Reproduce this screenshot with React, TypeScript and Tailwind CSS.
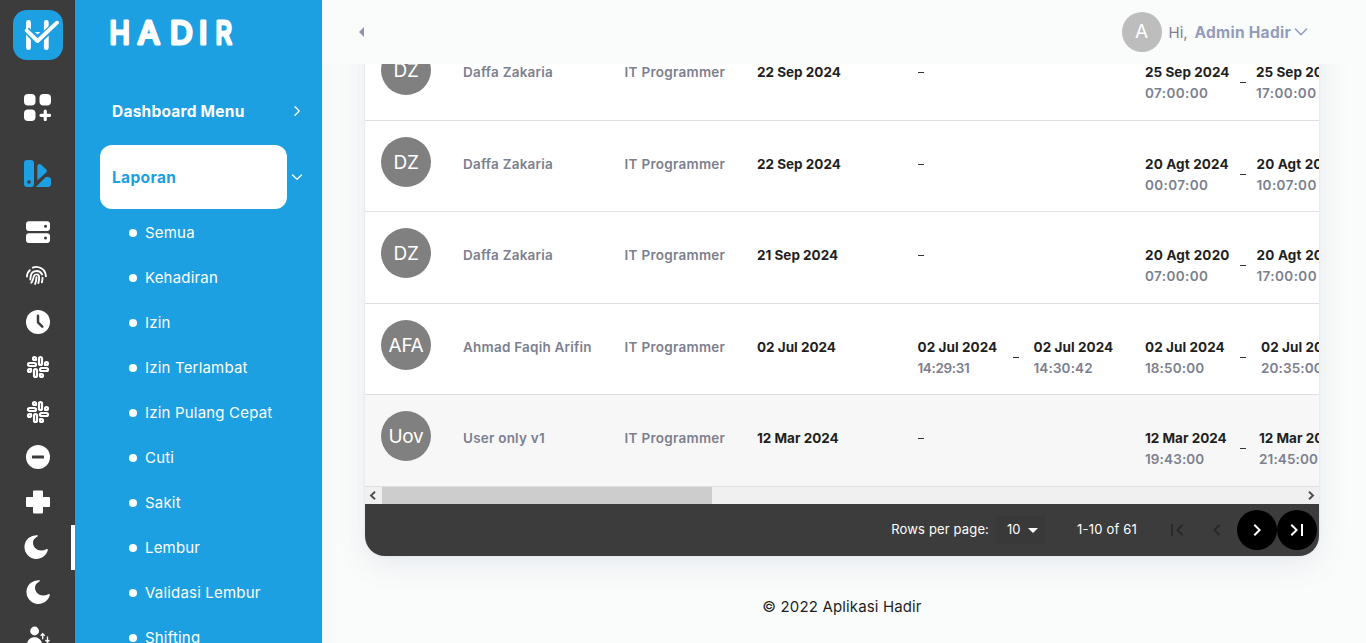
import type { ReactNode } from "react";
import { Slack } from "lucide-react";
import { MdArrowDropDown, MdChevronLeft, MdChevronRight, MdFirstPage, MdLastPage } from "react-icons/md";

type Stamp = { date: string; time: string; tracking?: string };
type Row = {
  initials: string;
  name: string;
  day: string;
  actual?: [Stamp, Stamp];
  plan: [Stamp, Stamp];
  planWidth: string;
  planGap: string;
  dateTracking?: string;
  height: string;
  bg: string;
};

const wide = "tracking-[0.4px]";
const tight = "tracking-[-0.35px]";
const mid = "tracking-[0.13px]";

const rows: Row[] = [
  {
    initials: "DZ", name: "Daffa Zakaria", day: "22 Sep 2024",
    plan: [{ date: "25 Sep 2024", time: "07:00:00", tracking: wide }, { date: "25 Sep 2024", time: "17:00:00", tracking: wide }],
    planWidth: "w-[111px]", planGap: "pr-[10px]", dateTracking: "tracking-[0.05px]", height: "h-[92px]", bg: "bg-white",
  },
  {
    initials: "DZ", name: "Daffa Zakaria", day: "22 Sep 2024",
    plan: [{ date: "20 Agt 2024", time: "00:07:00", tracking: wide }, { date: "20 Agt 2024", time: "10:07:00", tracking: wide }],
    planWidth: "w-[111.5px]", planGap: "pr-[11px]", dateTracking: "tracking-[0.13px]", height: "h-[91px]", bg: "bg-white",
  },
  {
    initials: "DZ", name: "Daffa Zakaria", day: "21 Sep 2024",
    plan: [{ date: "20 Agt 2020", time: "07:00:00", tracking: wide }, { date: "20 Agt 2020", time: "17:00:00", tracking: wide }],
    planWidth: "w-[111.5px]", planGap: "pr-[11px]", dateTracking: "tracking-[0.2px]", height: "h-[92px]", bg: "bg-white",
  },
  {
    initials: "AFA", name: "Ahmad Faqih Arifin", day: "02 Jul 2024",
    actual: [{ date: "02 Jul 2024", time: "14:29:31", tracking: tight }, { date: "02 Jul 2024", time: "14:30:42", tracking: mid }],
    plan: [{ date: "02 Jul 2024", time: "18:50:00", tracking: mid }, { date: "02 Jul 2024", time: "20:35:00", tracking: mid }],
    planWidth: "w-[116px]", planGap: "pr-[15px]", dateTracking: "tracking-[0.07px]", height: "h-[91px]", bg: "bg-white",
  },
  {
    initials: "Uov", name: "User only v1", day: "12 Mar 2024",
    plan: [{ date: "12 Mar 2024", time: "19:43:00", tracking: mid }, { date: "12 Mar 2024", time: "21:45:00", tracking: mid }],
    planWidth: "w-[114px]", planGap: "pr-[13px]", height: "h-[92px]", bg: "bg-[#f7f7f7]",
  },
];

function Dash() {
  return <span className="-ml-px h-px w-1.5 bg-[#333]" />;
}

function StampBlock({ stamp, dateTracking }: { stamp: Stamp; dateTracking?: string }) {
  return (
    <div className="whitespace-nowrap">
      <div className={`font-bold text-[#1f1f1f] ${dateTracking ?? ""}`}>{stamp.date}</div>
      <div className={`font-semibold text-[#7b808f] ${stamp.tracking ?? ""}`}>{stamp.time}</div>
    </div>
  );
}

function Range({ range, width, gap, dateTracking }: { range: [Stamp, Stamp]; width: string; gap: string; dateTracking?: string }) {
  return (
    <div className="flex">
      <div className={`flex shrink-0 justify-between ${width}`}>
        <StampBlock stamp={range[0]} dateTracking={dateTracking} />
        <span className={`flex items-center pb-px ${gap}`}>
          <Dash />
        </span>
      </div>
      <StampBlock stamp={range[1]} dateTracking={dateTracking} />
    </div>
  );
}

function TableRow({ row }: { row: Row }) {
  return (
    <div className={`flex shrink-0 items-start overflow-hidden border-b border-[#e0e0e0] text-[13.5px] leading-[21px] ${row.height} ${row.bg}`}>
      <div className="w-[98px] shrink-0 pt-4 pl-4">
        <div className="flex h-[50px] w-[50px] items-center justify-center rounded-full bg-[#808080] text-[19px] tracking-[-0.3px] text-white">
          {row.initials}
        </div>
      </div>
      <div className="w-[161.5px] shrink-0 pt-[33px] font-semibold tracking-[0.22px] text-[#7b808f]">{row.name}</div>
      <div className="w-[132.5px] shrink-0 pt-[33px] font-semibold tracking-[0.28px] text-[#7b808f]">IT Programmer</div>
      <div className="w-[160.5px] shrink-0 pt-[33px] font-bold text-[#1f1f1f]">{row.day}</div>
      <div className="w-[227.5px] shrink-0 pt-[33px]">
        {row.actual ? (
          <Range range={row.actual} width="w-[116px]" gap="pr-[15px]" dateTracking="tracking-[0.07px]" />
        ) : (
          <div className="flex h-[21px] items-center pl-[1.5px]">
            <Dash />
          </div>
        )}
      </div>
      <div className="shrink-0 pt-[33px]">
        <Range range={row.plan} width={row.planWidth} gap={row.planGap} dateTracking={row.dateTracking} />
      </div>
    </div>
  );
}

function BrandMark() {
  return (
    <svg className="h-[50px] w-[50px] shrink-0" viewBox="0 0 50 50" fill="none">
      <rect width="50" height="50" rx="14" fill="#1ca0e2" />
      <path d="M15.500 12.500V37.700M33.300 12.500V37.700" stroke="#fff" strokeWidth="4.800" strokeLinecap="round" />
      <path d="M13.500 20L24.500 31.500L44 13" stroke="#1ca0e2" strokeWidth="7" strokeLinejoin="round" />
      <path d="M21.800 22H27.400L24.600 24.600Z" fill="#fff" />
      <path d="M13.700 20.300L24.500 31L44 12.700" stroke="#fff" strokeWidth="3.900" strokeLinecap="round" strokeLinejoin="round" />
    </svg>
  );
}

function WordMark() {
  return (
    <svg className="h-10 w-[140px]" viewBox="0 0 140 40" fill="#fff" stroke="#fff" strokeWidth="3.200" strokeLinejoin="round" fontFamily="Inter" fontSize="31" fontWeight="400">
      <text x="2.400" y="32" textLength="20.300" lengthAdjust="spacingAndGlyphs">H</text>
      <text x="30.800" y="32" textLength="22" lengthAdjust="spacingAndGlyphs">A</text>
      <text x="63" y="32" textLength="22.800" lengthAdjust="spacingAndGlyphs">D</text>
      <text x="92" y="32">I</text>
      <text x="108.500" y="32" textLength="16.300" lengthAdjust="spacingAndGlyphs">R</text>
    </svg>
  );
}

function Moon() {
  return (
    <svg className="h-6 w-6" viewBox="0 0 24 24" fill="#fff">
      <path d="M13.3.2A11.9 11.9 0 1 0 23.8 15.3C24.1 14.2 23.3 13.6 22.3 14.2C16.6 17.6 9 14.500 9 7.600C9 5.200 10.500 3.200 13 1.800C14.200 1.100 14.200.3 13.300.2Z" />
    </svg>
  );
}

const railIcons: { key: string; icon: ReactNode; pad?: string; active?: boolean }[] = [
  {
    key: "all",
    icon: (
      <svg className="h-6 w-6" viewBox="0 0 24 24">
        <rect y="1.300" width="24" height="9.800" rx="3" fill="#fff" />
        <rect y="13.200" width="24" height="9.800" rx="3" fill="#fff" />
        <circle cx="19.500" cy="6.200" r="1.500" fill="#3c3c3c" />
        <circle cx="19.500" cy="18.100" r="1.500" fill="#3c3c3c" />
      </svg>
    ),
  },
  {
    key: "attendance",
    icon: (
      <svg className="h-6 w-6" viewBox="0 0 24 24" fill="none" stroke="#fff" strokeWidth="1.900" strokeLinecap="round">
        <path d="M1 11.500C1 9 2 6.800 3.800 5.200M6.800 2.600C12 .4 19.600 3.600 19.900 11.200" />
        <path d="M4.300 14.500C4.600 13.300 4.500 12.300 4.700 11C5.500 5.200 13.500 4.200 16.100 9.500" />
        <path d="M5.300 17.800C7.200 15 7.300 13.500 7.800 11.200C8.500 8.600 12.900 8.700 13.100 11.800C13.200 13.800 13 16 12.400 18" />
        <path d="M10.500 12.300C10.400 14.800 10 16.800 9.100 18.900M16.500 12.800C16.500 14.500 16.300 16 15.900 17.300" />
      </svg>
    ),
  },
  {
    key: "permit",
    icon: (
      <svg className="h-6 w-6" viewBox="0 0 24 24" fill="none">
        <circle cx="12" cy="12" r="12" fill="#fff" />
        <path d="M12 5.800V12.300L16.300 16.600" stroke="#3c3c3c" strokeWidth="2.500" strokeLinecap="round" strokeLinejoin="round" />
      </svg>
    ),
  },
  { key: "late", icon: <Slack size={24} strokeWidth={2.2} color="#fff" /> },
  { key: "early", icon: <Slack size={24} strokeWidth={2.2} color="#fff" /> },
  {
    key: "leave",
    icon: (
      <svg className="h-6 w-6" viewBox="0 0 24 24">
        <circle cx="12" cy="12" r="12" fill="#fff" />
        <rect x="6" y="10.400" width="12" height="3.100" rx=".5" fill="#3c3c3c" />
      </svg>
    ),
  },
  {
    key: "sick",
    icon: (
      <svg className="h-6 w-6" viewBox="0 0 24 24" fill="#fff">
        <path d="M8 .5h8a1 1 0 0 1 1 1V7h6a1 1 0 0 1 1 1v8a1 1 0 0 1-1 1h-6v5.500a1 1 0 0 1-1 1H8a1 1 0 0 1-1-1V17H1a1 1 0 0 1-1-1V8a1 1 0 0 1 1-1h6V1.500a1 1 0 0 1 1-1Z" />
      </svg>
    ),
  },
  { key: "overtime", icon: <Moon />, pad: "pr-1", active: true },
  { key: "validation", icon: <Moon /> },
  {
    key: "shifting",
    icon: (
      <svg className="h-6 w-6" viewBox="0 0 24 24" fill="none">
        <circle cx="8.600" cy="6" r="4.400" fill="#fff" />
        <path d="M1 20C1 9.800 16 9.800 16 20Z" fill="#fff" />
        <path d="M16.700 14.200V8.800M14.700 10.800L16.700 8.600L18.700 10.800M21.500 11.500V17M19.500 15L21.500 17.200L23.500 15" stroke="#fff" strokeWidth="1.300" />
      </svg>
    ),
  },
];

function Rail() {
  return (
    <nav className="flex h-full w-[75px] shrink-0 flex-col overflow-hidden bg-[#3c3c3c] pt-2.5">
      <div className="ml-[13px] h-[50px]">
        <BrandMark />
      </div>
      <svg className="mt-[34px] ml-6 h-[27px] w-[27px] shrink-0" viewBox="0 0 27 27" fill="#fff">
        <rect width="11.500" height="11.500" rx="4" />
        <rect x="15.500" width="11.500" height="11.500" rx="4" />
        <rect y="15.500" width="11.500" height="11.500" rx="4" />
        <path d="M21.250 17V25.600M17 21.300H25.500" stroke="#fff" strokeWidth="3.200" strokeLinecap="round" />
      </svg>
      <svg className="mt-[39px] ml-6 h-[27px] w-[27px] shrink-0" viewBox="0 0 27 27" fill="#1ca0e2">
        <rect width="10" height="27" rx="3.200" />
        <circle cx="5" cy="22" r="1.800" fill="#3c3c3c" />
        <path d="M13.300 20.500V6C13.300 4.300 15.800 3.400 17.300 4.700L21.900 9C23.100 10.200 23.200 11.500 22.200 12.500Z" />
        <path d="M11.800 27L21.800 17H24C25.800 17 27 18.200 27 20V24C27 25.800 25.800 27 24 27Z" />
      </svg>
      <div className="mt-[23px] flex flex-col">
        {railIcons.map((item) => (
          <div key={item.key} className={`flex h-[45px] shrink-0 justify-center border-r-4 pt-2.5 pl-[5px] ${item.active ? "border-white" : "border-transparent"} ${item.pad ?? ""}`}>
            {item.icon}
          </div>
        ))}
      </div>
    </nav>
  );
}

const reports = ["Semua", "Kehadiran", "Izin", "Izin Terlambat", "Izin Pulang Cepat", "Cuti", "Sakit", "Lembur", "Validasi Lembur", "Shifting"];

function Chevron({ className, d }: { className: string; d: string }) {
  return (
    <svg className={className} viewBox="0 0 12 12" fill="none" stroke="currentColor" strokeWidth="1.300" strokeLinecap="round" strokeLinejoin="round">
      <path d={d} />
    </svg>
  );
}

function Menu() {
  return (
    <aside className="flex h-full w-[247px] shrink-0 flex-col overflow-hidden bg-[#1ca0e2] text-white">
      <div className="h-[79px] shrink-0 pt-3 pl-8">
        <WordMark />
      </div>
      <div className="flex h-[66px] shrink-0 items-center justify-between pr-[19px] pl-[37px]">
        <span className="text-[15.5px] font-bold tracking-[0.23px]">Dashboard Menu</span>
        <Chevron className="mb-0.5 h-3 w-3" d="M4 1.800L8.200 6L4 10.200" />
      </div>
      <div className="flex h-16 shrink-0 items-center justify-between pr-[19px] pl-[25px]">
        <div className="flex h-16 w-[187px] items-center rounded-xl bg-white pt-0.5 pl-3 text-[15.5px] font-bold tracking-[0.35px] text-[#1ca0e2]">Laporan</div>
        <Chevron className="h-3 w-3" d="M1.500 4L6 8.200L10.500 4" />
      </div>
      <ul className="mt-px">
        {reports.map((label) => (
          <li key={label} className="flex h-[45px] items-center gap-2 pl-[54px] text-[15px] tracking-[0.19px]">
            <span className="mt-px h-2 w-2 rounded-full bg-white" />
            <span className="pt-0.5">{label}</span>
          </li>
        ))}
      </ul>
    </aside>
  );
}

function Header() {
  return (
    <header className="relative z-10 flex h-16 shrink-0 items-center bg-[#fafcfb] pr-[58px] pl-[37px]">
      <svg className="h-2.5 w-[5px]" viewBox="0 0 5 10" fill="#8d95b5">
        <path d="M5 0V10L0 5Z" />
      </svg>
      <div className="ml-auto flex items-center">
        <div className="flex h-10 w-10 items-center justify-center rounded-full bg-[#bdbdbd] pt-px text-[19px] text-white">A</div>
        <span className="ml-[7px] w-[26px] pt-0.5 text-[15px] text-[#7b808f]">Hi,</span>
        <span className="pt-0.5 text-[15.5px] font-bold tracking-[0.27px] whitespace-nowrap text-[#929cbb]">Admin Hadir</span>
        <Chevron className="ml-[3px] h-3.5 w-3.5 text-[#929cbb]" d="M1.200 3.500L6 8.300L10.800 3.500" />
      </div>
    </header>
  );
}

function ScrollBar() {
  return (
    <div className="flex h-[17px] shrink-0 items-center bg-[#f0f0f0] text-[#505050]">
      <div className="flex w-[17px] justify-center pr-0.5">
        <svg className="h-[9px] w-[7px]" viewBox="0 0 7 9" fill="none" stroke="currentColor" strokeWidth="2">
          <path d="M6 .7L2 4.500L6 8.300" />
        </svg>
      </div>
      <div className="h-full w-[330px] bg-[#cdcdcd]" />
      <div className="ml-auto flex w-[17px] justify-center pl-0.5">
        <svg className="h-[9px] w-[7px]" viewBox="0 0 7 9" fill="none" stroke="currentColor" strokeWidth="2">
          <path d="M1 .7L5 4.500L1 8.300" />
        </svg>
      </div>
    </div>
  );
}

function Pagination() {
  return (
    <div className="flex h-[52px] shrink-0 items-center justify-end rounded-b-[20px] bg-[#3c3c3c] pr-0.5 text-[13px] text-white">
      <span className="tracking-[0.15px]">Rows per page:</span>
      <div className="ml-[7px] flex h-7 w-[50px] items-center bg-[#393939] pl-[11px]">
        <span>10</span>
        <MdArrowDropDown className="h-6 w-6 shrink-0" />
      </div>
      <span className="mr-5 ml-[31px] w-[60px] tracking-[0.2px] whitespace-nowrap">1-10 of 61</span>
      <span className="flex h-10 w-10 items-center justify-center text-[#292929]"><MdFirstPage size={24} /></span>
      <span className="flex h-10 w-10 items-center justify-center text-[#292929]"><MdChevronLeft size={24} /></span>
      <button className="flex h-10 w-10 items-center justify-center rounded-full bg-black"><MdChevronRight size={24} /></button>
      <button className="flex h-10 w-10 items-center justify-center rounded-full bg-black"><MdLastPage size={24} /></button>
    </div>
  );
}

export default function App() {
  return (
    <div className="flex h-[643px] w-full overflow-hidden bg-[#fafcfb] font-['Inter',sans-serif]">
      <Rail />
      <Menu />
      <div className="flex min-w-0 flex-1 flex-col shadow-[inset_20px_0_20px_-20px_rgba(90,100,140,0.05)]">
        <Header />
        <main className="-mt-[35px] flex flex-col pr-[47px] pl-[43px]">
          <section className="flex flex-col rounded-b-[20px] shadow-[0_8px_30px_rgba(90,97,150,0.12),0_0_2px_rgba(90,97,150,0.15)]">
            <div className="flex flex-col overflow-hidden">
              {rows.map((row, i) => (
                <TableRow key={i} row={row} />
              ))}
            </div>
            <ScrollBar />
            <Pagination />
          </section>
          <footer className="mt-10 text-center text-[15px] tracking-[0.14px] text-[#1f1f1f]">© 2022 Aplikasi Hadir</footer>
        </main>
      </div>
    </div>
  );
}
